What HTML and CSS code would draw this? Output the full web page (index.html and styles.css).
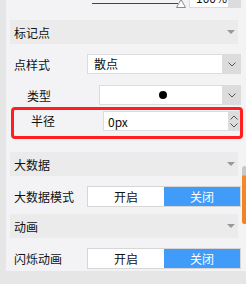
FILE: index.html
```html
<!DOCTYPE html>
<html lang="zh">
<head>
  <meta charset="UTF-8" />
  <meta name="viewport" content="width=device-width, initial-scale=1.0" />
  <title>标记点设置</title>
  <link rel="stylesheet" href="styles.css">
</head>
<body>
  <div class="panel">
    <!-- Fila superior (recortada): deslizador de opacidad -->
    <div class="slider-row">
      <div class="slider">
        <div class="slider-line"></div>
        <svg class="slider-thumb" width="10" height="9" viewBox="0 0 10 9"><polygon points="5,0.5 9.5,8.5 0.5,8.5" fill="#fff" stroke="#888" stroke-width="1"/></svg>
      </div>
      <div class="select small">
        <span class="select-text">100%</span>
        <span class="select-arrow"><svg width="8" height="5" viewBox="0 0 8 5"><polyline points="0.5,0.5 4,4 7.5,0.5" fill="none" stroke="#555" stroke-width="1"/></svg></span>
      </div>
    </div>

    <!-- ===== 标记点 ===== -->
    <div class="section-head">
      <span>标记点</span>
      <span class="caret"></span>
    </div>
    <div class="row row-style">
      <label class="row-label">点样式</label>
      <div class="select">
        <span class="select-text">散点</span>
        <span class="select-arrow"><svg width="8" height="5" viewBox="0 0 8 5"><polyline points="0.5,0.5 4,4 7.5,0.5" fill="none" stroke="#555" stroke-width="1"/></svg></span>
      </div>
    </div>
    <div class="row sub row-type">
      <label class="row-label">类型</label>
      <div class="select">
        <span class="select-text center"><span class="dot"></span></span>
        <span class="select-arrow"><svg width="8" height="5" viewBox="0 0 8 5"><polyline points="0.5,0.5 4,4 7.5,0.5" fill="none" stroke="#555" stroke-width="1"/></svg></span>
      </div>
    </div>
    <div class="row sub highlight">
      <label class="row-label">半径</label>
      <div class="number">
        <span class="number-text">0px</span>
        <span class="spin">
          <svg width="8" height="5" viewBox="0 0 8 5"><polyline points="0.5,4.5 4,1 7.5,4.5" fill="none" stroke="#555" stroke-width="1"/></svg>
          <svg width="8" height="5" viewBox="0 0 8 5"><polyline points="0.5,0.5 4,4 7.5,0.5" fill="none" stroke="#555" stroke-width="1"/></svg>
        </span>
      </div>
    </div>

    <!-- ===== 大数据 ===== -->
    <div class="section-head head-big">
      <span>大数据</span>
      <span class="caret"></span>
    </div>
    <div class="row row-toggle">
      <label class="row-label">大数据模式</label>
      <div class="toggle">
        <span class="toggle-opt">开启</span>
        <span class="toggle-opt active">关闭</span>
      </div>
    </div>

    <!-- ===== 动画 ===== -->
    <div class="section-head head-anim">
      <span>动画</span>
      <span class="caret"></span>
    </div>
    <div class="row row-toggle">
      <label class="row-label">闪烁动画</label>
      <div class="toggle">
        <span class="toggle-opt">开启</span>
        <span class="toggle-opt active">关闭</span>
      </div>
    </div>

    <!-- Barra de desplazamiento -->
    <div class="scroll-thumb"></div>
  </div>
</body>
</html>
```

FILE: styles.css
```css
/* ===== Base ===== */
* { box-sizing: border-box; margin: 0; padding: 0; }
html, body { height: 100%; overflow: hidden; }
body { font-family: "Noto Sans CJK SC", "Noto Sans", sans-serif; font-size: 12px; color: #111; background: #e6e6e6; }

/* ===== Panel ===== */
.panel { position: relative; margin-left: 6px; padding: 0 5px 0 4px; height: 100%; background: #f3f3f5; }

/* Fila superior recortada */
.slider-row { display: flex; align-items: center; height: 21px; margin-top: -13px; padding-left: 82px; }
.slider { position: relative; display: flex; align-items: center; width: 93px; height: 21px; margin-top: 2px; }
.slider-line { width: 86px; height: 1px; background: #444; margin-top: 9px; }
.slider-thumb { position: absolute; left: 84px; top: 11px; }
.select.small { width: 52px; height: 21px; margin-left: 4px; }

/* Cabeceras de sección */
.section-head { display: flex; align-items: center; justify-content: space-between; height: 24px; margin: 12px 3px 0 0; padding: 0 3px 0 4px; background: #ebebeb; }
.caret { width: 0; height: 0; border-left: 4px solid transparent; border-right: 4px solid transparent; border-top: 4px solid #999; }
.head-big { margin-top: 13px; }
.head-anim { margin-top: 7px; }

/* Filas */
.row { display: flex; align-items: center; padding-left: 4px; }
.row-label { width: 73px; flex: none; }
.row.sub { padding-left: 17px; }
.row.sub .row-label { width: 72px; }
.row-style { margin-top: 10px; }
.row-type { margin-top: 11px; }
.row-toggle { margin-top: 10px; }

/* Select */
.select { flex: 1; display: flex; height: 20px; background: #fff; border: 1px solid #dcdcdc; border-right: none; }
.select-text { flex: 1; display: flex; align-items: center; padding-left: 6px; line-height: 1; }
.select-text.center { justify-content: center; padding-left: 0; }
.select-arrow { width: 19px; display: flex; align-items: center; justify-content: center; background: #dcdcdc; }
.select.small .select-arrow { width: 13px; }
.dot { width: 8px; height: 8px; border-radius: 50%; background: #000; margin-left: 4px; }

/* Campo numérico resaltado */
.highlight { align-items: flex-start; margin: 2px -2px 0 1px; padding: 1px 0 5px 13px; border: 3px solid #ff1f1f; border-radius: 4px; }
.highlight .row-label { line-height: 20px; }
.number { flex: 1; display: flex; height: 20px; background: #fff; border: 1px solid #dcdcdc; border-right: none; }
.number-text { flex: 1; display: flex; align-items: center; padding-left: 4px; }
.spin { width: 12px; display: flex; flex-direction: column; align-items: center; justify-content: center; gap: 3px; background: #dcdcdc; }

/* Interruptor 开启/关闭 */
.toggle { flex: 1; display: flex; height: 21px; border: 1px solid #d6d6d6; background: #fff; }
.toggle-opt { flex: 1; display: flex; align-items: center; justify-content: center; }
.toggle-opt.active { background: #409cf8; color: #fff; }

/* Barra de desplazamiento */
.scroll-thumb { position: absolute; right: -1px; top: 179px; width: 5px; height: 58px; border-radius: 3px; background: linear-gradient(#c8c8c8 0, #c8c8c8 9px, #f5892c 10px, #f08024 100%); }
```
